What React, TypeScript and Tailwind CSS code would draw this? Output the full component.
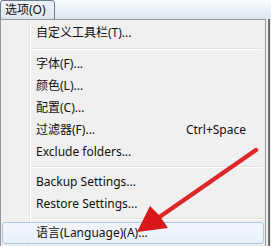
import React from "react";

type Item =
  | { kind: "item"; label: string; shortcut?: string; active?: boolean }
  | { kind: "sep"; h: number };

const items: Item[] = [
  { kind: "item", label: "自定义工具栏(T)..." },
  { kind: "sep", h: 9 },
  { kind: "item", label: "字体(F)..." },
  { kind: "item", label: "颜色(L)..." },
  { kind: "item", label: "配置(C)..." },
  { kind: "item", label: "过滤器(F)...", shortcut: "Ctrl+Space" },
  { kind: "item", label: "Exclude folders..." },
  { kind: "sep", h: 8 },
  { kind: "item", label: "Backup Settings..." },
  { kind: "item", label: "Restore Settings..." },
  { kind: "sep", h: 7 },
  { kind: "item", label: "语言(Language)(A)...", active: true },
];

function MenuRow({ item }: { item: Item }) {
  if (item.kind === "sep") {
    return (
      <div className="flex flex-col justify-center pl-[31px] pr-[2px]" style={{ height: item.h }}>
        <div className="h-px bg-[#e0e0e0]" />
        <div className="h-px bg-white" />
      </div>
    );
  }
  if (item.active) {
    return (
      <div className="relative mx-[1px] flex h-[22px] items-center rounded-[3px] border border-[#a8c8ec] bg-gradient-to-b from-[#f3f7fc] to-[#e8f0fa] pl-[33px] pr-4">
        <span>{item.label}</span>
      </div>
    );
  }
  return (
    <div className="relative flex h-[22px] items-center justify-between pl-[35px] pr-[19px]">
      <span>{item.label}</span>
      {item.shortcut && <span>{item.shortcut}</span>}
    </div>
  );
}

export default function App() {
  return (
    <div
      className="relative h-[246px] w-[271px] overflow-hidden bg-[#f0f0f0] text-[12px] leading-none text-[#111]"
      style={{ fontFamily: '"Noto Sans", "Noto Sans CJK SC", sans-serif' }}
    >
      <div className="flex h-[19px] bg-gradient-to-b from-[#fbfcfe] to-[#dde6f2]">
        <div className="flex h-[20px] w-[55px] items-center rounded-t-[3px] border border-[#6f7c8e] bg-gradient-to-b from-[#eef2f7] to-[#dfe6ef] pl-[4px]">
          选项(O)
        </div>
      </div>
      <div className="flex h-[227px]">
        <div className="relative w-[266px] border-l border-r border-t border-[#979797] pt-[2px]">
          <div className="absolute bottom-0 left-[28px] top-0 w-[2px] border-l border-[#e2e3e3] bg-white" />
          {items.map((it, i) => (
            <MenuRow key={i} item={it} />
          ))}
        </div>
        <div className="w-[2px] bg-[#f0f0f0]" />
        <div className="w-[2px] bg-[#6d6d6d]" />
        <div className="flex-1 bg-[#e8e8e8]" />
      </div>
      <svg className="pointer-events-none absolute left-0 top-0" width="271" height="246" viewBox="0 0 271 246">
        <defs>
          <linearGradient id="ar" x1="0" y1="0" x2="1" y2="1">
            <stop offset="0" stopColor="#f04040" />
            <stop offset="1" stopColor="#c81010" />
          </linearGradient>
        </defs>
        <line x1="256" y1="150" x2="158" y2="218" stroke="url(#ar)" strokeWidth="4.5" strokeLinecap="round" />
        <polygon points="137,232 150,206 159,215 168,228" fill="#d81818" />
      </svg>
    </div>
  );
}
